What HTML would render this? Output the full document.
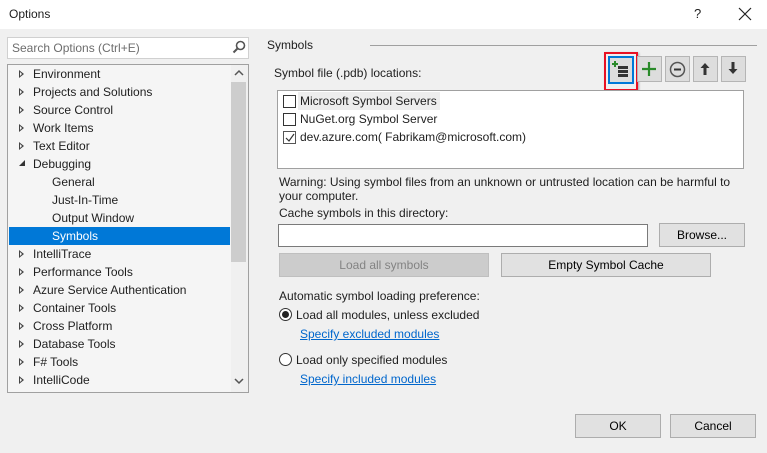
<!DOCTYPE html>
<html><head><meta charset="utf-8"><style>
*{margin:0;padding:0;box-sizing:border-box}
body{width:767px;height:453px;background:#f0f0f0;font-family:"Liberation Sans",sans-serif;font-size:12px;color:#1e1e1e;position:relative;overflow:hidden}
.a{position:absolute;white-space:nowrap}
.t{line-height:16px}
.btn{position:absolute;background:#e1e1e1;border:1px solid #adadad;text-align:center;line-height:23px;color:#000}
.tb{position:absolute;background:#dddddd;border:1px solid #b5b5b5;width:25px;height:26px}
.cb{position:absolute;width:13px;height:13px;border:1px solid #333;background:#fff}
.tri{position:absolute;left:19px;width:0;height:0;border-top:4px solid transparent;border-bottom:4px solid transparent;border-left:5px solid #444}
.tri::after{content:"";position:absolute;left:-4px;top:-2px;border-top:2px solid transparent;border-bottom:2px solid transparent;border-left:2.5px solid #f5f5f5}
a{color:#0066cc;text-decoration:underline}
</style></head><body>
<div class="a" style="left:0;top:0;width:767px;height:29px;background:#fff"></div>
<div class="a t" style="left:9px;top:6px">Options</div>
<div class="a t" style="left:694px;top:6px;font-size:13px">?</div>
<svg class="a" style="left:738px;top:7px" width="14" height="14"><path d="M1 1L13 13M13 1L1 13" stroke="#222" stroke-width="1.2"/></svg>

<div class="a" style="left:7px;top:37px;width:242px;height:22px;background:#fff;border:1px solid #d0d0d0"></div>
<div class="a t" style="left:12px;top:40px;color:#6d6d6d">Search Options (Ctrl+E)</div>
<svg class="a" style="left:232px;top:40px" width="14" height="14"><circle cx="8.5" cy="5.5" r="4" fill="none" stroke="#555" stroke-width="1.6"/><path d="M6 8L1.5 12.5" stroke="#555" stroke-width="2"/></svg>

<div class="a" style="left:7px;top:64px;width:242px;height:329px;background:#f5f5f5;border:1px solid #a0a0a0"></div>
<div class="a" style="left:231px;top:65px;width:17px;height:327px;background:#f0f0f0"></div>
<div class="a" style="left:231px;top:82px;width:15px;height:180px;background:#cdcdcd"></div>
<svg class="a" style="left:234px;top:69px" width="10" height="8"><path d="M1 6L5 2L9 6" fill="none" stroke="#555" stroke-width="1.5"/></svg>
<svg class="a" style="left:234px;top:377px" width="10" height="8"><path d="M1 2L5 6L9 2" fill="none" stroke="#555" stroke-width="1.5"/></svg>
<div class="a" style="left:9px;top:227px;width:221px;height:18px;background:#0078d7"></div>

<div class="tri" style="top:70px"></div><div class="a t" style="left:33px;top:66px">Environment</div>
<div class="tri" style="top:88px"></div><div class="a t" style="left:33px;top:84px">Projects and Solutions</div>
<div class="tri" style="top:106px"></div><div class="a t" style="left:33px;top:102px">Source Control</div>
<div class="tri" style="top:124px"></div><div class="a t" style="left:33px;top:120px">Work Items</div>
<div class="tri" style="top:142px"></div><div class="a t" style="left:33px;top:138px">Text Editor</div>
<svg class="a" style="left:18px;top:159px" width="8" height="8"><path d="M7 1L7 7L1 7Z" fill="#333"/></svg><div class="a t" style="left:33px;top:156px">Debugging</div>
<div class="a t" style="left:52px;top:174px">General</div>
<div class="a t" style="left:52px;top:192px">Just-In-Time</div>
<div class="a t" style="left:52px;top:210px">Output Window</div>
<div class="a t" style="left:52px;top:228px;color:#fff">Symbols</div>
<div class="tri" style="top:250px"></div><div class="a t" style="left:33px;top:246px">IntelliTrace</div>
<div class="tri" style="top:268px"></div><div class="a t" style="left:33px;top:264px">Performance Tools</div>
<div class="tri" style="top:286px"></div><div class="a t" style="left:33px;top:282px">Azure Service Authentication</div>
<div class="tri" style="top:304px"></div><div class="a t" style="left:33px;top:300px">Container Tools</div>
<div class="tri" style="top:322px"></div><div class="a t" style="left:33px;top:318px">Cross Platform</div>
<div class="tri" style="top:340px"></div><div class="a t" style="left:33px;top:336px">Database Tools</div>
<div class="tri" style="top:358px"></div><div class="a t" style="left:33px;top:354px">F# Tools</div>
<div class="tri" style="top:376px"></div><div class="a t" style="left:33px;top:372px">IntelliCode</div>

<div class="a t" style="left:267px;top:37px">Symbols</div>
<div class="a" style="left:370px;top:45px;width:387px;height:1px;background:#a0a0a0"></div>
<div class="a t" style="left:274px;top:65px">Symbol file (.pdb) locations:</div>

<div class="a" style="left:604px;top:52px;width:34px;height:39px;border:2px solid #e81123;box-shadow:1px 1px 2px rgba(0,0,0,.3)"></div>
<div class="a" style="left:608px;top:56px;width:26px;height:28px;background:#dddddd;border:2px solid #0078d7"></div>
<svg class="a" style="left:612px;top:60px" width="18" height="18"><path d="M3 1V7M0 4H6" stroke="#2a8a2a" stroke-width="2"/><rect x="6" y="6" width="10" height="3" fill="#333"/><rect x="6" y="10" width="10" height="3" fill="#333"/><rect x="6" y="14" width="10" height="3" fill="#333"/></svg>
<div class="tb" style="left:637px;top:56px"></div>
<svg class="a" style="left:641px;top:61px" width="16" height="16"><path d="M8 1V15M1 8H15" stroke="#2a8a2a" stroke-width="2.2"/></svg>
<div class="tb" style="left:665px;top:56px"></div>
<svg class="a" style="left:669px;top:61px" width="17" height="17"><circle cx="8.5" cy="8.5" r="7" fill="none" stroke="#555" stroke-width="1.5"/><path d="M5 8.5H12" stroke="#333" stroke-width="2"/></svg>
<div class="tb" style="left:693px;top:56px"></div>
<svg class="a" style="left:699px;top:62px" width="12" height="14"><path d="M6 1L1.5 6H4.5V13H7.5V6H10.5Z" fill="#333"/></svg>
<div class="tb" style="left:721px;top:56px"></div>
<svg class="a" style="left:727px;top:61px" width="12" height="14"><path d="M6 13L1.5 8H4.5V1H7.5V8H10.5Z" fill="#333"/></svg>

<div class="a" style="left:277px;top:90px;width:467px;height:79px;background:#fff;border:1px solid #a0a0a0"></div>
<div class="a" style="left:298px;top:92px;width:142px;height:18px;background:#ededed"></div>
<div class="cb" style="left:283px;top:95px"></div><div class="a t" style="left:300px;top:93px">Microsoft Symbol Servers</div>
<div class="cb" style="left:283px;top:113px"></div><div class="a t" style="left:300px;top:111px">NuGet.org Symbol Server</div>
<div class="cb" style="left:283px;top:131px;border-color:#555"></div>
<svg class="a" style="left:285px;top:133px" width="10" height="10"><path d="M1 5L4 8L9 1" fill="none" stroke="#333" stroke-width="1.2"/></svg>
<div class="a t" style="left:300px;top:129px">dev.azure.com( Fabrikam@microsoft.com)</div>

<div class="a t" style="left:279px;top:174px">Warning: Using symbol files from an unknown or untrusted location can be harmful to</div>
<div class="a t" style="left:279px;top:188px">your computer.</div>
<div class="a t" style="left:279px;top:205px">Cache symbols in this directory:</div>
<div class="a" style="left:278px;top:224px;width:370px;height:23px;background:#fff;border:1px solid #7a7a7a"></div>
<div class="btn" style="left:659px;top:223px;width:86px;height:24px">Browse...</div>
<div class="btn" style="left:279px;top:253px;width:210px;height:24px;background:#cccccc;border-color:#bfbfbf;color:#838383">Load all symbols</div>
<div class="btn" style="left:501px;top:253px;width:210px;height:24px">Empty Symbol Cache</div>

<div class="a t" style="left:279px;top:288px">Automatic symbol loading preference:</div>
<div class="a" style="left:279px;top:308px;width:13px;height:13px;border-radius:50%;border:1px solid #333;background:#fff"></div>
<div class="a" style="left:282px;top:311px;width:7px;height:7px;border-radius:50%;background:#222"></div>
<div class="a t" style="left:296px;top:307px">Load all modules, unless excluded</div>
<div class="a t" style="left:300px;top:326px"><a>Specify excluded modules</a></div>
<div class="a" style="left:279px;top:353px;width:13px;height:13px;border-radius:50%;border:1px solid #333;background:#fff"></div>
<div class="a t" style="left:296px;top:352px">Load only specified modules</div>
<div class="a t" style="left:300px;top:371px"><a>Specify included modules</a></div>

<div class="btn" style="left:575px;top:414px;width:86px;height:24px">OK</div>
<div class="btn" style="left:670px;top:414px;width:86px;height:24px">Cancel</div>
</body></html>
